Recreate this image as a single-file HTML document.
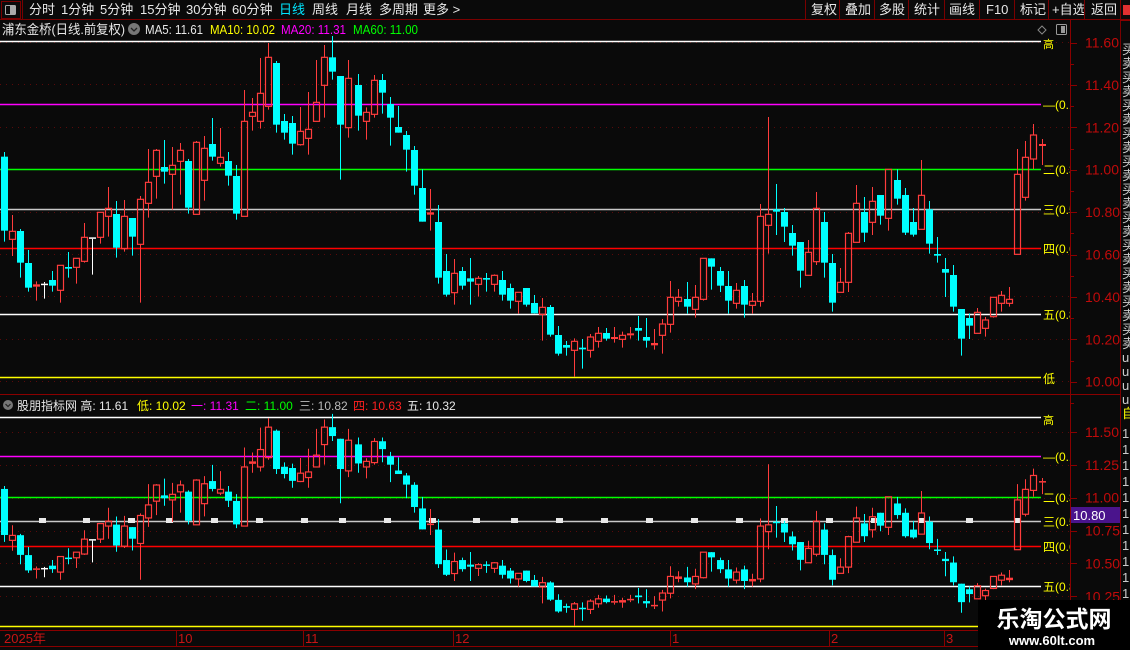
<!DOCTYPE html>
<html><head><meta charset="utf-8">
<style>
html,body{margin:0;padding:0;background:#0a0a0a;width:1130px;height:650px;overflow:hidden;font-family:"Liberation Sans","Noto Sans CJK SC",sans-serif;}
svg{position:absolute;left:0;top:0}
text{font-family:"Liberation Sans","Noto Sans CJK SC",sans-serif}
</style></head><body>
<svg id="s" width="1130" height="650" xmlns="http://www.w3.org/2000/svg">
<rect width="1130" height="650" fill="#0a0a0a"/>
<line x1="0" y1="19.5" x2="1130" y2="19.5" stroke="#7a0000"/>
<rect x="1.5" y="1.5" width="19" height="17" fill="none" stroke="#7a0000"/>
<rect x="5.5" y="5.5" width="10" height="9" rx="1" fill="none" stroke="#aaa"/><rect x="10" y="6" width="5" height="8" fill="#aaa"/>
<line x1="22.5" y1="0" x2="22.5" y2="19" stroke="#7a0000"/>
<g font-size="13" fill="#e8e8e8">
<text x="29" y="14">分时</text><text x="61" y="14">1分钟</text><text x="100" y="14">5分钟</text><text x="140" y="14">15分钟</text><text x="186" y="14">30分钟</text><text x="232" y="14">60分钟</text>
<text x="279" y="14" fill="#00e5ff">日线</text><text x="312" y="14">周线</text><text x="346" y="14">月线</text><text x="379" y="14">多周期</text><text x="423" y="14">更多 &gt;</text>
<text x="811" y="14">复权</text><text x="845" y="14">叠加</text><text x="879" y="14">多股</text><text x="914" y="14">统计</text><text x="949" y="14">画线</text><text x="986" y="14">F10</text><text x="1020" y="14">标记</text><text x="1052" y="14">+自选</text><text x="1091" y="14">返回</text>
</g>
<g stroke="#7a0000"><line x1="805.5" y1="0" x2="805.5" y2="19"/><line x1="839.5" y1="0" x2="839.5" y2="19"/><line x1="874.5" y1="0" x2="874.5" y2="19"/><line x1="908.5" y1="0" x2="908.5" y2="19"/><line x1="944.5" y1="0" x2="944.5" y2="19"/><line x1="979.5" y1="0" x2="979.5" y2="19"/><line x1="1014.5" y1="0" x2="1014.5" y2="19"/><line x1="1048.5" y1="0" x2="1048.5" y2="19"/><line x1="1084.5" y1="0" x2="1084.5" y2="19"/><line x1="1120.5" y1="0" x2="1120.5" y2="650"/></g>
<rect x="1123" y="5" width="7" height="10" fill="#e03030"/>
<g font-size="13">
<text x="2" y="34" fill="#e8e8e8" textLength="123" lengthAdjust="spacingAndGlyphs">浦东金桥(日线.前复权)</text>
<circle cx="134" cy="29" r="6" fill="#777"/><path d="M131 28 L134 31 L137 28" stroke="#222" fill="none" stroke-width="1.3"/>
<text x="145" y="34" fill="#e8e8e8" textLength="58" lengthAdjust="spacingAndGlyphs">MA5: 11.61</text><text x="210" y="34" fill="#ffff00" textLength="65" lengthAdjust="spacingAndGlyphs">MA10: 10.02</text><text x="281" y="34" fill="#ff00ff" textLength="65" lengthAdjust="spacingAndGlyphs">MA20: 11.31</text><text x="353" y="34" fill="#00ff00" textLength="65" lengthAdjust="spacingAndGlyphs">MA60: 11.00</text>
</g>
<path d="M1042 26 L1046 30 L1042 34 L1038 30 Z" fill="none" stroke="#888"/>
<rect x="1056.5" y="24.5" width="10" height="10" rx="1" fill="none" stroke="#999"/><rect x="1061" y="26" width="4" height="7" fill="#999"/>
<line x1="1070.5" y1="20" x2="1070.5" y2="630" stroke="#8a0000"/>
<line x1="0" y1="394.5" x2="1120" y2="394.5" stroke="#8a0000"/>
<g font-size="12">
<circle cx="8" cy="405" r="5" fill="#777"/><path d="M5.5 404 L8 406.5 L10.5 404" stroke="#222" fill="none" stroke-width="1.2"/>
<text x="17" y="410" fill="#e8e8e8">股朋指标网 高: 11.61</text><text x="137" y="410" fill="#ffff00">低: 10.02</text><text x="191" y="410" fill="#ff00ff">一: 11.31</text><text x="245" y="410" fill="#00ff00">二: 11.00</text><text x="299" y="410" fill="#bbbbbb">三: 10.82</text><text x="353" y="410" fill="#ff2020">四: 10.63</text><text x="407" y="410" fill="#e8e8e8">五: 10.32</text>
</g>
<g id="g"></g>
<line x1="0" y1="630.5" x2="1120" y2="630.5" stroke="#8a0000"/>
<line x1="0" y1="646.5" x2="1120" y2="646.5" stroke="#8a0000"/>
<g stroke="#8a0000"><line x1="176.5" y1="630" x2="176.5" y2="646"/><line x1="303.5" y1="630" x2="303.5" y2="646"/><line x1="453.5" y1="630" x2="453.5" y2="646"/><line x1="670.5" y1="630" x2="670.5" y2="646"/><line x1="829.5" y1="630" x2="829.5" y2="646"/><line x1="944.5" y1="630" x2="944.5" y2="646"/></g>
<g font-size="13" fill="#c81414"><text x="4" y="643">2025年</text><text x="178" y="643">10</text><text x="305" y="643">11</text><text x="455" y="643">12</text><text x="672" y="643">1</text><text x="831" y="643">2</text><text x="946" y="643">3</text></g>
<rect x="978" y="600" width="152" height="50" fill="#000"/>
<text x="1054" y="627" font-size="23" font-weight="bold" fill="#fff" text-anchor="middle">乐淘公式网</text>
<text x="1052" y="645" font-size="13" font-weight="bold" fill="#fff" text-anchor="middle" font-family="Liberation Serif, serif">www.60lt.com</text>
</svg>
<script>
var A=[[13,'d',350,572,336,605],[37,'u',574,598,525,648],[61,'d',573,668,567,713],[85,'d',669,743,630,755],[109,'u',733,740,724,782],[133,'w',731,733,726,776],[157,'d',720,737,693,755],[181,'u',676,751,676,788],[205,'d',681,686,636,713],[229,'u',655,682,655,731],[253,'u',592,664,549,668],[277,'w',592,594,592,704],[301,'u',517,592,517,611],[325,'u',505,529,441,590],[349,'d',522,623,483,653],[373,'u',529,626,480,635],[397,'d',534,590,534,647],[421,'u',478,613,468,788],[445,'u',427,490,327,533],[469,'u',331,409,327,476],[493,'d',381,395,300,431],[517,'u',376,403,321,509],[541,'u',331,364,309,464],[565,'d',363,503,357,521],[589,'u',307,523,303,523],[613,'u',325,421,288,482],[637,'d',312,350,234,362],[661,'u',352,370,264,380],[685,'d',363,407,336,437],[709,'d',408,521,375,539],[733,'u',244,529,150,529],[757,'u',217,229,174,272],[781,'u',160,244,54,266],[805,'u',52,199,9,209],[829,'d',69,254,63,278],[853,'d',243,278,222,299],[877,'d',249,311,228,344],[901,'u',274,314,201,317],[925,'u',268,295,156,344],[949,'u',187,244,60,244],[973,'u',52,136,15,233],[997,'d',52,95,-12,119],[1021,'d',108,254,108,419],[1045,'u',115,263,60,293]];
var B=[[55,'d',75,167,42,212],[79,'u',157,184,142,239],[103,'u',61,163,45,173],[127,'d',60,98,42,161],[151,'d',132,173,111,257],[175,'d',201,218,138,218],[199,'d',225,269,213,335],[223,'d',270,377,258,404],[247,'d',384,485,328,485],[271,'u',457,464,387,512],[295,'d',486,653,435,671],[319,'d',633,704,582,710],[343,'u',640,698,597,734],[367,'d',633,677,621,689],[391,'d',655,665,594,734],[415,'u',655,673,648,710],[439,'d',654,659,639,695],[463,'u',646,673,643,695],[487,'d',660,704,633,722],[511,'d',684,722,671,746],[535,'u',697,724,697,761],[559,'d',684,734,684,740],[583,'d',729,760,705,760],[607,'u',742,763,714,842],[631,'d',741,824,735,830],[655,'d',825,881,798,887],[679,'d',855,863,843,887],[703,'u',844,871,835,950],[727,'d',863,868,837,926],[751,'u',831,871,822,893],[775,'u',820,844,801,863],[799,'d',819,836,804,842],[823,'u',831,837,801,848],[847,'u',826,838,815,863],[871,'u',820,826,801,836],[895,'d',804,812,768,842],[919,'d',831,842,774,863],[943,'u',849,856,807,869],[967,'u',792,826,777,881],[991,'u',712,793,663,818],[1015,'u',712,724,687,740]];
var C=[[22,'d',567,590,516,611],[46,'u',562,598,525,623],[70,'u',445,568,445,572],[94,'d',445,470,445,539],[121,'d',483,527,471,546],[145,'d',528,572,483,611],[169,'u',541,580,519,596],[193,'d',528,584,510,623],[217,'u',574,586,549,611],[241,'u',319,574,282,590],[265,'u',313,346,21,431],[289,'d',298,305,222,375],[313,'d',306,350,294,396],[337,'d',369,407,345,437],[361,'d',396,482,396,533],[385,'u',427,496,390,496],[409,'u',295,455,246,465],[433,'d',336,458,306,503],[457,'d',459,578,432,605],[481,'u',517,547,474,547],[505,'u',370,517,366,546],[529,'u',280,397,225,397],[553,'d',306,368,261,396],[577,'u',274,337,231,375],[601,'d',255,317,255,344],[625,'u',178,325,178,362],[652,'d',210,266,178,284],[676,'d',255,368,234,375],[700,'d',336,374,294,380],[724,'u',256,358,150,358],[748,'d',298,401,273,431],[772,'d',432,437,381,458],[796,'d',477,488,444,561],[820,'d',495,590,465,605],[844,'d',597,686,597,737],[868,'d',624,647,610,687],[892,'u',607,670,594,670],[916,'u',630,655,621,680],[940,'u',562,620,562,623],[964,'u',556,580,543,605],[988,'u',568,580,531,590],[1012,'u',193,433,117,433],[1036,'u',142,262,93,272],[1060,'u',75,147,42,177],[1085,'u',102,108,87,165]];
var cs=[];
function add(arr,ox,oy){arr.forEach(function(a){cs.push({x:ox+a[0]/3,c:a[1],bt:oy+a[2]/3,bb:oy+a[3]/3,hi:oy+a[4]/3,lo:oy+a[5]/3});});}
add(A,0,40);add(B,340,60);add(C,680,110);
var h='';
function L(x1,y1,x2,y2,c,extra){h+='<line x1="'+x1+'" y1="'+y1+'" x2="'+x2+'" y2="'+y2+'" stroke="'+c+'"'+(extra||'')+'/>';}
var dot=' stroke-dasharray="1 5"';
for(var k=0;k<9;k++){var y=Math.round(42+42.4*k)+0.5;L(0,y,1070,y,'#5a0a0a',dot);}
for(var k=0;k<6;k++){var y=Math.round(432+32.85*k)+0.5;L(0,y,1070,y,'#5a0a0a',dot);}
var tl=['11.60','11.40','11.20','11.00','10.80','10.60','10.40','10.20','10.00'];
for(var k=0;k<9;k++){var y=42.5+42.4*k;h+='<text x="1085" y="'+(y+5)+'" font-size="14" fill="#c00a0a">'+tl[k]+'</text>';L(1071,Math.round(y)+0.5,1077,Math.round(y)+0.5,'#8a0000');L(1071,Math.round(y+21.2)+0.5,1074,Math.round(y+21.2)+0.5,'#8a0000');}
var bl=['11.50','11.25','11.00','10.75','10.50','10.25'];
for(var k=0;k<6;k++){var y=432+32.85*k;h+='<text x="1085" y="'+(y+5)+'" font-size="14" fill="#c00a0a">'+bl[k]+'</text>';L(1071,Math.round(y)+0.5,1077,Math.round(y)+0.5,'#8a0000');}
function lvl(yt,yb,c){L(0,yt+0.5,1041,yt+0.5,c,' stroke-width="1.5"');L(0,yb+0.5,1041,yb+0.5,c,' stroke-width="1.5"');}
var lv=[[41,417,'#ffffff','高'],[104,456,'#ff00ff','—(0.1'],[169,497,'#00ff00','二(0.3'],[209,521,'#c8c8c8','三(0.5'],[248,546,'#ff0000','四(0.6'],[314,586,'#ffffff','五(0.8'],[377,626,'#ffff00','低']];
lv.forEach(function(v){lvl(v[0],v[1],v[2]);});
var sq=[42,86,131,169,214,259,304,342,387,432,476,514,559,604,649,694,739,784,829,874,921,969,1017];
sq.forEach(function(x){h+='<rect x="'+(x-3)+'" y="518" width="7" height="5" fill="#e8e8e8"/>';});
function cand(d,f){var x=Math.round(d.x)+0.5;var bt=f(d.bt),bb=f(d.bb),hi=f(d.hi),lo=f(d.lo);if(bb-bt<1.5){bb=bt+1.5;}
 if(d.c=='d'){L(x,hi,x,lo,'#00ffff');h+='<rect x="'+(x-3.5)+'" y="'+bt+'" width="7" height="'+(bb-bt)+'" fill="#00ffff"/>';}
 else{var c=d.c=='w'?'#ffffff':'#ff3c3c';L(x,hi,x,bt,c);L(x,bb,x,lo,c);
  if(bb-bt<3){h+='<rect x="'+(x-3.5)+'" y="'+bt+'" width="7" height="'+Math.max(1.5,bb-bt)+'" fill="'+c+'"/>';}
  else h+='<rect x="'+(x-3)+'" y="'+bt+'" width="6" height="'+(bb-bt)+'" fill="none" stroke="'+c+'" stroke-width="1.2"/>';}}
cs.forEach(function(d){cand(d,function(y){return y;});});
cs.forEach(function(d){cand(d,function(y){return 417+(y-41)*0.622;});});
h+='<svg x="1041" y="20" width="29" height="610" overflow="hidden">';
lv.forEach(function(v,i){[v[0],v[1]].forEach(function(y){var yy=y-20;
 if(i==0){h+='<text x="2" y="'+(yy+7)+'" font-size="11" fill="#ffff00">高</text>';}
 else if(i==6){h+='<text x="2" y="'+(yy+6)+'" font-size="12" fill="#ffff00">低</text>';}
 else{h+='<text x="2" y="'+(yy+5)+'" font-size="12" fill="#ffff00">'+v[3]+'</text>';}});});
h+='</svg>';
h+='<svg x="1122" y="20" width="8" height="610" overflow="hidden">';
var gc='买卖买卖买卖买卖买卖买卖买卖买卖买卖买卖买卖';
for(var k=0;k<26;k++){var y=34+k*14;if(y>390)break;h+='<text x="0" y="'+y+'" font-size="13" fill="#cccccc">'+gc[k]+'</text>';}
h+='<text x="0" y="398" font-size="13" fill="#ffff00">自</text>';
for(var k=0;k<14;k++){h+='<text x="0" y="'+(418+k*16)+'" font-size="13" fill="#cccccc">1</text>';}
h+='</svg>';
L(1120,20.5,1130,20.5,'#8a0000');
h+='<rect x="1071" y="507" width="49" height="16" fill="#4a148c"/><text x="1073" y="520" font-size="13" fill="#fff">10.80</text>';
document.getElementById('g').innerHTML=h;
</script>
</body></html>
